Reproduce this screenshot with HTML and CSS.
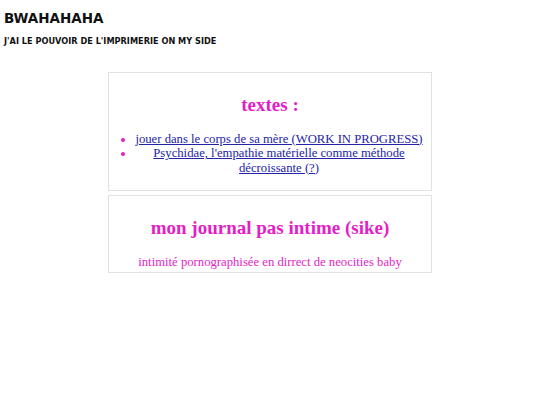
FILE: index.html
```html
<!DOCTYPE html>
<html>
<head>
<meta charset="utf-8">
<link rel="stylesheet" href="styles.css">
</head>
<body>
<header class="top">
  <h1 class="site-title">BWAHAHAHA</h1>
  <p class="site-sub">J'AI LE POUVOIR DE L'IMPRIMERIE ON MY SIDE</p>
</header>
<main class="boxes">
  <section class="box box-list">
    <h2 class="box-title">textes :</h2>
    <ul class="links">
      <li><a href="#">jouer dans le corps de sa mère (WORK IN PROGRESS)</a></li>
      <li><a href="#">Psychidae, l'empathie matérielle comme méthode décroissante (?)</a></li>
    </ul>
  </section>
  <section class="box box-journal">
    <h2 class="box-title">mon journal pas intime (sike)</h2>
    <p class="box-text">intimité pornographisée en dirrect de neocities baby</p>
  </section>
</main>
</body>
</html>
```
FILE: styles.css
```css
html, body { margin: 0; padding: 0; background: #fff; }
body { padding: 10px 4px; font-family: "Liberation Serif", serif; }
.top { font-family: "DejaVu Sans", Verdana, sans-serif; }
.site-title { margin: 0; font-size: 13.5px; font-weight: bold; color: #111; line-height: 16px; }
.site-sub { margin: 10px 0 0; font-size: 8.2px; font-weight: bold; color: #111; line-height: 10px; }
.boxes { width: 324px; margin: 26px auto 0; display: flex; flex-direction: column; gap: 4px; }
.box { border: 1px solid #e2e2e2; text-align: center; padding: 20px 0 15px; }
.box-journal { padding-bottom: 2px; }
.box-title { margin: 0; font-size: 19px; font-weight: bold; color: #e31ec8; line-height: 24px; }
.links { margin: 14.5px 0 0; padding: 0 8px 0 26px; font-size: 12.7px; line-height: 14.5px; color: #e31ec8; }
.links a { color: #2323a8; }
.box-text { margin: 15px 0 0; font-size: 12.7px; line-height: 14.5px; color: #e31ec8; }
```
